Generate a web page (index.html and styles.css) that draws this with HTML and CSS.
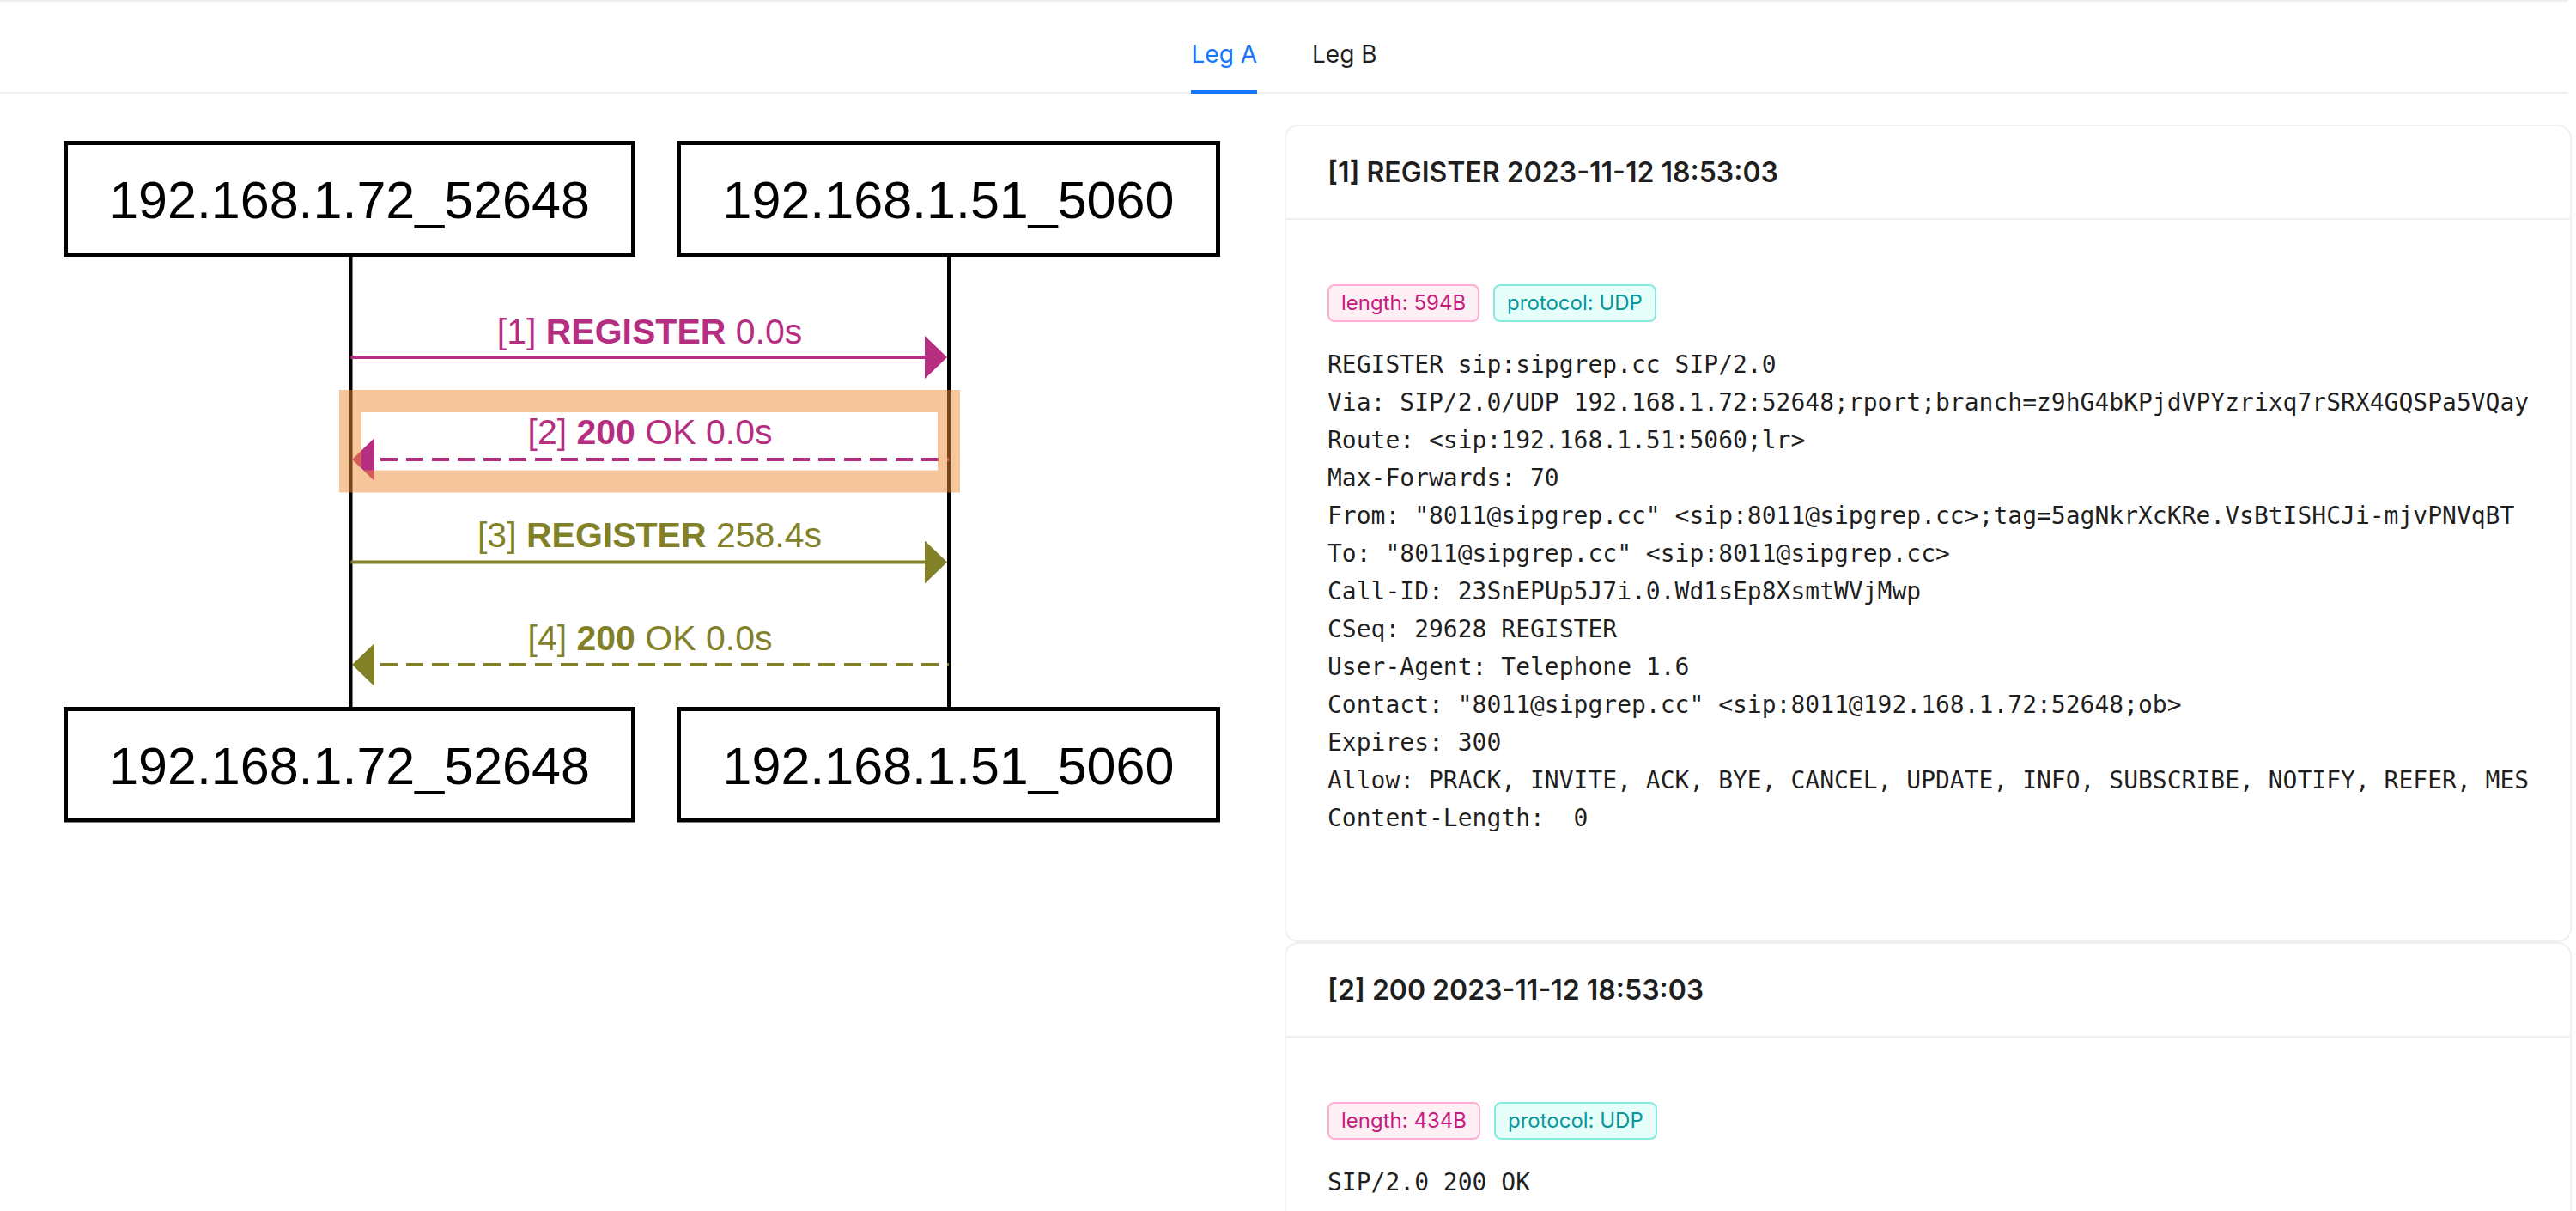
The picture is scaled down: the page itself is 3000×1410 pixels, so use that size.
FILE: index.html
```html
<!DOCTYPE html>
<html lang="en">
<head>
<meta charset="utf-8">
<title>SIP Flow</title>
<link rel="stylesheet" href="styles.css">
</head>
<body>
<div class="page">
  <div class="tabs-nav">
    <div class="tab active">Leg A<span class="ink"></span></div>
    <div class="tab">Leg B</div>
  </div>
  <div class="content">
    <div class="diagram-col">
      <svg class="diagram" width="1496" height="830" viewBox="0 142 1496 830" xmlns="http://www.w3.org/2000/svg">
        <!-- lifelines -->
        <line class="life" x1="408.5" y1="299" x2="408.5" y2="823"/>
        <line class="life" x1="1105" y1="299" x2="1105" y2="823"/>
        <!-- top boxes -->
        <rect class="box" x="76.5" y="166.5" width="661" height="130"/>
        <rect class="box" x="790.5" y="166.5" width="628" height="130"/>
        <text class="host" x="407" y="254">192.168.1.72_52648</text>
        <text class="host" x="1104.5" y="254">192.168.1.51_5060</text>
        <!-- bottom boxes -->
        <rect class="box" x="76.5" y="825.5" width="661" height="129.5"/>
        <rect class="box" x="790.5" y="825.5" width="628" height="129.5"/>
        <text class="host" x="407" y="913">192.168.1.72_52648</text>
        <text class="host" x="1104.5" y="913">192.168.1.51_5060</text>

        <!-- message 1 -->
        <line class="msg mag-s" x1="408.5" y1="416" x2="1080" y2="416"/>
        <polygon class="mag-f" points="1077,391 1103,416 1077,441"/>
        <text class="lbl mag-f" x="756.5" y="400">[1] <tspan class="b">REGISTER</tspan> 0.0s</text>

        <!-- message 2 -->
        <line class="msg dash mag-s" x1="443" y1="535" x2="1105" y2="535"/>
        <polygon class="mag-f" points="436,510 410,535 436,560"/>
        <text class="lbl mag-f" x="757" y="517">[2] <tspan class="b">200</tspan> OK 0.0s</text>

        <!-- highlight -->
        <rect class="hl" x="408" y="467" width="697" height="93.5"/>

        <!-- message 3 -->
        <line class="msg olv-s" x1="408.5" y1="654.5" x2="1080" y2="654.5"/>
        <polygon class="olv-f" points="1077,629.5 1103,654.5 1077,679.5"/>
        <text class="lbl olv-f" x="756.5" y="637">[3] <tspan class="b">REGISTER</tspan> 258.4s</text>

        <!-- message 4 -->
        <line class="msg dash olv-s" x1="443" y1="774" x2="1105" y2="774"/>
        <polygon class="olv-f" points="436,749 410,774 436,799"/>
        <text class="lbl olv-f" x="757" y="757">[4] <tspan class="b">200</tspan> OK 0.0s</text>
      </svg>
    </div>
    <div class="cards-col">
      <div class="card">
        <div class="card-head">[1] REGISTER 2023-11-12 18:53:03</div>
        <div class="card-body">
          <div class="tags"><span class="tag tag-magenta">length: 594B</span><span class="tag tag-cyan">protocol: UDP</span></div>
<pre class="sip">REGISTER sip:sipgrep.cc SIP/2.0
Via: SIP/2.0/UDP 192.168.1.72:52648;rport;branch=z9hG4bKPjdVPYzrixq7rSRX4GQSPa5VQay
Route: &lt;sip:192.168.1.51:5060;lr&gt;
Max-Forwards: 70
From: "8011@sipgrep.cc" &lt;sip:8011@sipgrep.cc&gt;;tag=5agNkrXcKRe.VsBtISHCJi-mjvPNVqBT
To: "8011@sipgrep.cc" &lt;sip:8011@sipgrep.cc&gt;
Call-ID: 23SnEPUp5J7i.0.Wd1sEp8XsmtWVjMwp
CSeq: 29628 REGISTER
User-Agent: Telephone 1.6
Contact: "8011@sipgrep.cc" &lt;sip:8011@192.168.1.72:52648;ob&gt;
Expires: 300
Allow: PRACK, INVITE, ACK, BYE, CANCEL, UPDATE, INFO, SUBSCRIBE, NOTIFY, REFER, MES
Content-Length:  0</pre>
        </div>
      </div>
      <div class="card">
        <div class="card-head">[2] 200 2023-11-12 18:53:03</div>
        <div class="card-body">
          <div class="tags"><span class="tag tag-magenta">length: 434B</span><span class="tag tag-cyan">protocol: UDP</span></div>
<pre class="sip">SIP/2.0 200 OK</pre>
        </div>
      </div>
    </div>
  </div>
</div>
</body>
</html>
```
FILE: styles.css
```css
html, body {
  margin: 0;
  padding: 0;
  background: #ffffff;
  overflow: hidden;
}
body {
  font-family: Inter, "Noto Sans", Roboto, sans-serif;
  color: rgba(0, 0, 0, 0.88);
}
.page {
  width: 2991px;
  border-top: 2px solid #eeeeee;
}
.tabs-nav {
  display: flex;
  justify-content: center;
  gap: 64px;
  margin-top: 15px;
  border-bottom: 2px solid #f0f0f0;
}
.tab {
  position: relative;
  font-size: 28px;
  line-height: 44px;
  padding: 24px 0 22px;
  color: rgba(0, 0, 0, 0.88);
}
.tab.active {
  color: #1677ff;
}
.ink {
  position: absolute;
  left: 0;
  right: 0;
  bottom: -2px;
  height: 4px;
  background: #1677ff;
}
.content {
  display: grid;
  grid-template-columns: 1496px 1fr;
  margin-top: 36px;
}
.diagram {
  display: block;
  margin-top: -3px;
}
.life {
  stroke: #000;
  stroke-width: 4;
}
.box {
  fill: #fff;
  stroke: #000;
  stroke-width: 5;
}
.host {
  font-family: "Liberation Sans", Arial, sans-serif;
  font-size: 61px;
  text-anchor: middle;
  fill: #000;
}
.msg {
  stroke-width: 4;
}
.dash {
  stroke-dasharray: 20 10;
}
.lbl {
  font-family: "Liberation Sans", Arial, sans-serif;
  font-size: 41px;
  text-anchor: middle;
}
.b {
  font-weight: bold;
}
.mag-s { stroke: #b62e82; }
.mag-f { fill: #b62e82; }
.olv-s { stroke: #828128; }
.olv-f { fill: #828128; }
.hl {
  fill: none;
  stroke: rgba(239, 139, 53, 0.5);
  stroke-width: 26;
}
.cards-col {
  display: flex;
  flex-direction: column;
}
.card {
  border: 2px solid #f0f0f0;
  border-radius: 16px;
  background: #fff;
}
.card-head {
  min-height: 109px;
  box-sizing: border-box;
  display: flex;
  align-items: center;
  padding: 0 48px;
  font-size: 32px;
  font-weight: 600;
  border-bottom: 2px solid #f0f0f0;
  color: rgba(0, 0, 0, 0.88);
}
.card-body {
  padding: 48px;
}
.tags {
  margin-top: 27px;
  display: flex;
}
.tag {
  box-sizing: border-box;
  height: 44px;
  line-height: 40px;
  padding: 0 14px;
  font-size: 24px;
  border-radius: 8px;
  border: 2px solid;
  margin-right: 16px;
}
.tag-magenta {
  color: #c41d7f;
  background: #fff0f6;
  border-color: #ffadd2;
}
.tag-cyan {
  color: #08979c;
  background: #e6fffb;
  border-color: #87e8de;
}
.sip {
  font-family: "DejaVu Sans Mono", "Liberation Mono", monospace;
  font-size: 28px;
  line-height: 44px;
  margin: 28px 0 72px;
  color: rgba(0, 0, 0, 0.88);
  white-space: pre;
}
```
